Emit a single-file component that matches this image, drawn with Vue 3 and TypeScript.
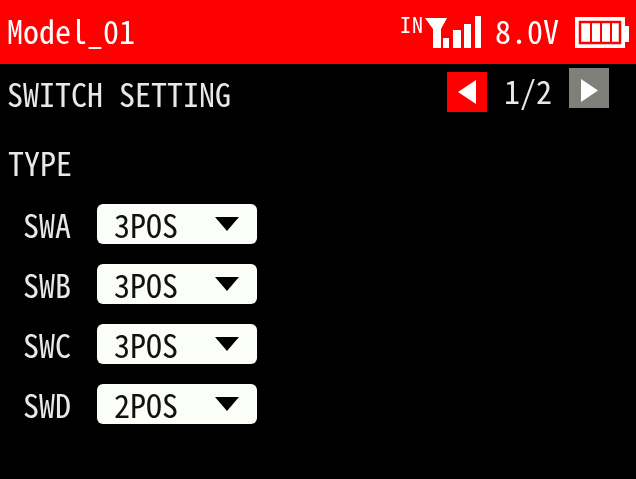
<script setup lang="ts">
const rows = [
  { name: 'SWA', value: '3POS' },
  { name: 'SWB', value: '3POS' },
  { name: 'SWC', value: '3POS' },
  { name: 'SWD', value: '2POS' },
]
</script>

<template>
  <div class="screen">
    <header class="top">
      <span class="model">Model_01</span>
      <div class="status">
        <span class="in">IN</span>
        <svg class="signal" width="57" height="32" viewBox="0 0 57 32">
          <path d="M0 2H22L16 13V32H8V13Z" fill="#fff" />
          <rect x="18" y="22" width="6" height="10" fill="#fff" />
          <rect x="28" y="14" width="8" height="18" fill="#fff" />
          <rect x="39" y="8" width="7" height="24" fill="#fff" />
          <rect x="50" y="0" width="6" height="32" fill="#fff" />
        </svg>
        <span class="volt">8.0V</span>
        <svg class="battery" width="54" height="31" viewBox="0 0 54 31">
          <path d="M0 0H50V31H0ZM50 9H54V25H50Z" fill="#fff" />
          <rect x="5" y="5" width="40" height="21" fill="none" stroke="#f00" stroke-width="2.5" />
          <path d="M16 5V26M26 5V26M36 5V26" stroke="#f00" stroke-width="2" />
        </svg>
      </div>
    </header>
    <div class="sub">
      <span class="title">SWITCH SETTING</span>
      <div class="pager">
        <button class="page prev" type="button">
          <svg width="18" height="24" viewBox="0 0 18 24"><path d="M18 0V24L0 12Z" fill="#fff" /></svg>
        </button>
        <span class="count">1/2</span>
        <button class="page next" type="button">
          <svg class="next-arrow" width="17" height="23" viewBox="0 0 17 23"><path d="M0 0V23L17 11.5Z" fill="#fff" /></svg>
        </button>
      </div>
    </div>
    <div class="type">TYPE</div>
    <div class="rows">
      <div v-for="row in rows" :key="row.name" class="row">
        <span class="name">{{ row.name }}</span>
        <div class="select">
          <span class="value">{{ row.value }}</span>
          <svg width="24" height="14" viewBox="0 0 24 14"><path d="M0 0H24L12 14Z" fill="#000" /></svg>
        </div>
      </div>
    </div>
  </div>
</template>

<style>
html, body { margin: 0; background: #000; }
</style>

<style scoped>
.screen {
  width: 636px;
  height: 479px;
  overflow: hidden;
  background: #000;
  color: #e8e8e8;
  font-family: "Noto Sans CJK JP", "Liberation Mono", monospace;
  font-size: 32px;
  font-weight: 400;
  line-height: 40px;
  font-feature-settings: "hwid";
  filter: blur(0.6px);
}
.top {
  height: 64px;
  background: #f00;
  color: #fff;
  display: flex;
  align-items: center;
  justify-content: space-between;
  padding: 0 7px 0 7px;
}
.model { margin-top: -4px; }
.status { display: flex; align-items: center; }
.in { font-size: 22px; line-height: 20px; letter-spacing: 1px; margin: -19px 1px 0 0; }
.signal { margin-right: 13px; }
.volt { width: 64px; margin-top: -5px; margin-right: 16px; }
.battery { display: block; }
.sub {
  height: 64px;
  display: flex;
  justify-content: space-between;
  padding: 0 27px 0 7px;
}
.title { margin-top: 9px; height: 40px; }
.pager { display: flex; align-items: flex-start; }
.page {
  width: 40px;
  height: 40px;
  padding: 0;
  border: 0;
  display: flex;
  align-items: center;
  justify-content: center;
}
.prev { background: #f00; margin-top: 8px; }
.next { background: #7f8079; margin-top: 4px; }
.next-arrow { margin-top: 5px; }
.count { width: 82px; text-align: center; margin-top: 6px; height: 40px; }
.type { padding-left: 8px; margin-top: 14px; height: 40px; margin-bottom: 22px; }
.rows { display: flex; flex-direction: column; gap: 20px; }
.row { display: flex; align-items: center; height: 40px; padding-left: 23px; }
.name { width: 74px; margin-top: -1px; }
.select {
  width: 160px;
  height: 40px;
  box-sizing: border-box;
  background: #fbfdf9;
  color: #111;
  border-radius: 6px;
  padding: 0 18px 0 17px;
  display: flex;
  align-items: center;
  justify-content: space-between;
}
.value { margin-top: -1px; }
</style>
